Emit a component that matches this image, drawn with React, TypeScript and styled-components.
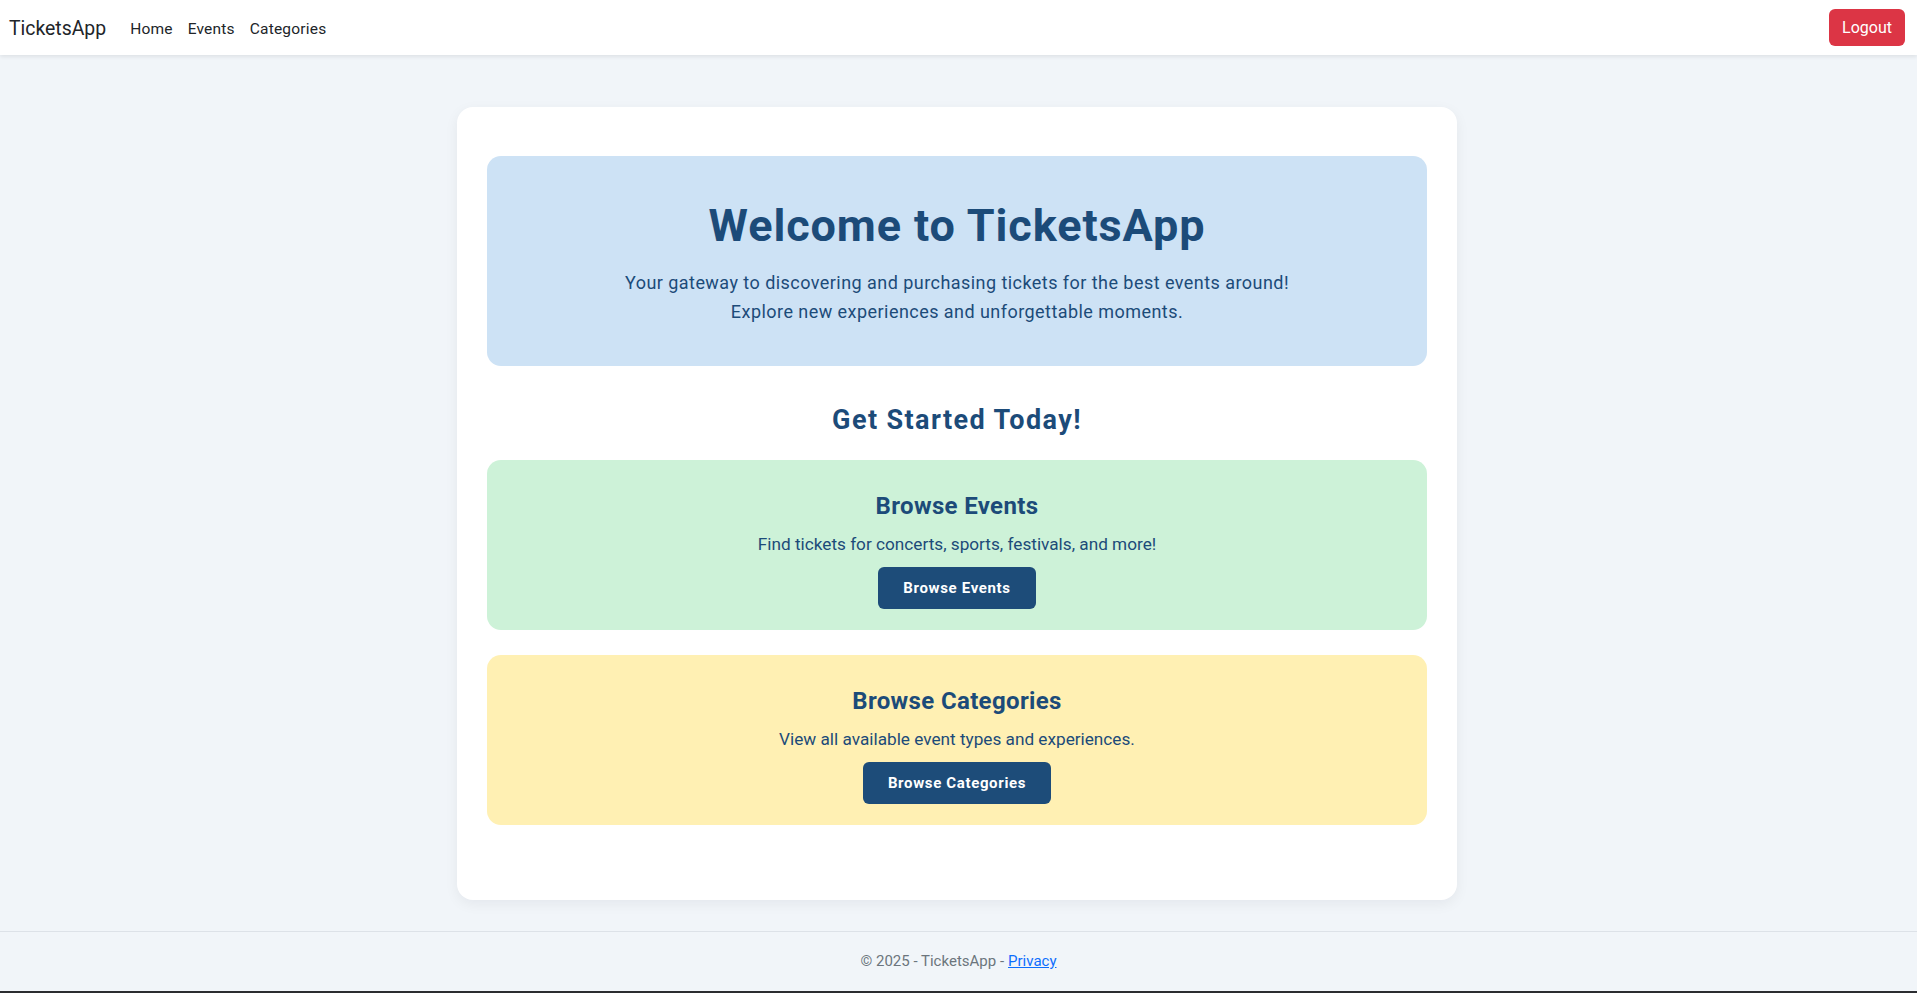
import React from "react";
import styled, { createGlobalStyle } from "styled-components";

const GlobalStyle = createGlobalStyle`
  * { box-sizing: border-box; }
  html, body { margin: 0; padding: 0; }
  body {
    background: #f1f5f9;
    font-family: "Segoe UI", Roboto, "Noto Sans", "Liberation Sans", sans-serif;
    color: #212529;
  }
`;

const Page = styled.div`
  display: flex;
  flex-direction: column;
  min-height: 993px;
`;

const NavBar = styled.nav`
  height: 55px;
  background: #ffffff;
  box-shadow: 0 2px 4px rgba(0, 0, 0, 0.08);
  display: flex;
  align-items: center;
  justify-content: space-between;
  padding: 0 12px 0 9px;
  position: relative;
  z-index: 1;
`;

const NavLeft = styled.div`
  display: flex;
  align-items: center;
`;

const Brand = styled.a`
  font-size: 19.4px;
  color: #212529;
  text-decoration: none;
  margin-right: 24px;
  padding-top: 2px;
`;

const NavLink = styled.a`
  font-size: 15.5px;
  letter-spacing: 0.2px;
  color: #212529;
  text-decoration: none;
  margin-right: 15px;
  padding-top: 3px;
`;

const LogoutButton = styled.button`
  background: #dc3545;
  color: #ffffff;
  border: none;
  border-radius: 6px;
  font-family: inherit;
  font-size: 16px;
  height: 37px;
  width: 76px;
  padding: 0;
  margin-top: -1px;
`;

const Main = styled.main`
  flex: 1;
  display: flex;
  justify-content: center;
  padding: 52px 3px 31px 0;
`;

const Card = styled.div`
  width: 1000px;
  background: #ffffff;
  border-radius: 16px;
  box-shadow: 0 4px 14px rgba(15, 23, 42, 0.06);
  padding: 49px 30px 75px;
  display: flex;
  flex-direction: column;
`;

const Hero = styled.section`
  background: #cde2f5;
  border-radius: 14px;
  padding: 43px 32px 40px;
  text-align: center;
  color: #1c4b79;
`;

const HeroTitle = styled.h1`
  margin: 0 0 15px;
  font-size: 45px;
  line-height: 54px;
  letter-spacing: 0.9px;
  font-weight: 700;
`;

const HeroText = styled.p`
  margin: 0;
  font-size: 18px;
  line-height: 29px;
  letter-spacing: 0.45px;
`;

const SectionTitle = styled.h2`
  margin: 39px 0 24px;
  text-align: center;
  font-size: 27px;
  line-height: 31px;
  letter-spacing: 1.4px;
  font-weight: 700;
  color: #1c4b79;
`;

const ActionCard = styled.div<{ $bg: string }>`
  background: ${(p) => p.$bg};
  border-radius: 14px;
  padding: 32px 24px 21px;
  display: flex;
  flex-direction: column;
  align-items: center;
  gap: 10px;
  color: #1c4b79;
  & + & {
    margin-top: 25px;
  }
`;

const ActionTitle = styled.h3`
  margin: 0;
  font-size: 24px;
  line-height: 29px;
  letter-spacing: 0.35px;
  font-weight: 700;
`;

const ActionText = styled.p`
  margin: 0;
  font-size: 17.2px;
  line-height: 26px;
`;

const ActionButton = styled.button`
  background: #1d4c79;
  color: #ffffff;
  border: none;
  border-radius: 6px;
  font-family: inherit;
  font-weight: 700;
  font-size: 15px;
  letter-spacing: 0.65px;
  height: 42px;
  padding: 0 25px;
`;

const Footer = styled.footer`
  height: 63px;
  border-top: 1px solid #dde2e8;
  border-bottom: 3px solid #2b2d30;
  display: flex;
  align-items: center;
  justify-content: center;
  font-size: 15px;
  color: #6c757d;
  padding-bottom: 1px;
`;

const FooterLink = styled.a`
  color: #0d6efd;
  text-decoration: underline;
  margin-left: 4px;
`;

export default function App() {
  return (
    <Page>
      <GlobalStyle />
      <NavBar>
        <NavLeft>
          <Brand href="#">TicketsApp</Brand>
          <NavLink href="#">Home</NavLink>
          <NavLink href="#">Events</NavLink>
          <NavLink href="#">Categories</NavLink>
        </NavLeft>
        <LogoutButton>Logout</LogoutButton>
      </NavBar>
      <Main>
        <Card>
          <Hero>
            <HeroTitle>Welcome to TicketsApp</HeroTitle>
            <HeroText>
              Your gateway to discovering and purchasing tickets for the best events around!
            </HeroText>
            <HeroText>Explore new experiences and unforgettable moments.</HeroText>
          </Hero>
          <SectionTitle>Get Started Today!</SectionTitle>
          <ActionCard $bg="#cdf2d8">
            <ActionTitle>Browse Events</ActionTitle>
            <ActionText>Find tickets for concerts, sports, festivals, and more!</ActionText>
            <ActionButton>Browse Events</ActionButton>
          </ActionCard>
          <ActionCard $bg="#fff0b3">
            <ActionTitle>Browse Categories</ActionTitle>
            <ActionText>View all available event types and experiences.</ActionText>
            <ActionButton>Browse Categories</ActionButton>
          </ActionCard>
        </Card>
      </Main>
      <Footer>
        © 2025 - TicketsApp -<FooterLink href="#">Privacy</FooterLink>
      </Footer>
    </Page>
  );
}
